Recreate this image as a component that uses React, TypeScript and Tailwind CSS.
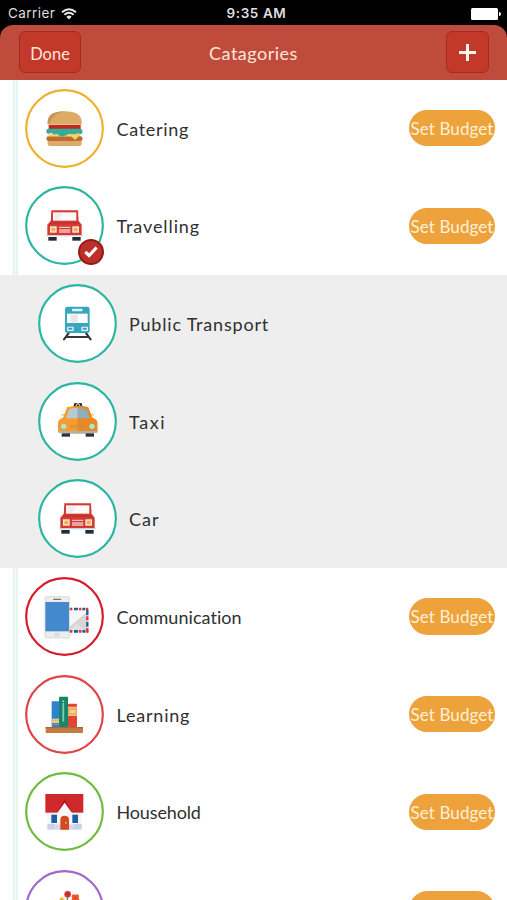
import type { ReactNode } from 'react';

const BurgerIcon = () => (
  <>
    <path d="M68 107V98Q70 67 119 67T170 98V107Z" fill="#dfaa66" />
    <path d="M68 104V98Q70 67 119 67Q84 73 74 104Z" fill="#c9965a" />
    <rect x="71" y="108" width="96" height="13" fill="#c0291f" />
    <path d="M71 141L91 130H160L167 142Z" fill="#f2d27c" />
    <path d="M71 119H166Q173 121 173 128T165 136Q160 130 153 134T138 136Q132 131 125 136T109 136Q101 130 94 135T80 132Q64 138 64 128T71 119Z" fill="#35ad97" />
    <rect x="64" y="142" width="109" height="14" rx="7" fill="#bc6c2c" />
    <path d="M71 136H166Q158 145 151 153Q143 145 137 142H71Z" fill="#f5cf68" />
    <path d="M87 134Q94 127 102 135T125 134T154 133" fill="none" stroke="#35ad97" strokeWidth="7" />
    <path d="M68 156H170V165Q170 171 163 171H75Q68 171 68 165Z" fill="#deaa69" />
  </>
);

const CarIcon = () => (
  <>
    <path d="M79 73H159L161 110H77Z" fill="#d43a33" />
    <path d="M84 79H154V104H84Z" fill="#fafafa" />
    <path d="M88 102V81H112L104 102Z" fill="#f0eeee" />
    <path d="M77 105H161L170 116V148H67V116Z" fill="#d43a33" />
    <path d="M77 108H161L166 114H72Z" fill="#c4342e" />
    <rect x="64" y="147" width="109" height="4" fill="#cfd2d4" />
    <rect x="75" y="121" width="20" height="19" fill="#f8eee0" />
    <rect x="142" y="121" width="20" height="19" fill="#f8eee0" />
    <rect x="79" y="125" width="12" height="11" fill="#f3ae45" />
    <rect x="146" y="125" width="12" height="11" fill="#f3ae45" />
    <path d="M102 124H136M102 132H136M102 138H136" stroke="#efc3bf" strokeWidth="4" />
    <rect x="70" y="153" width="25" height="11" fill="#1e2e3b" />
    <rect x="142" y="153" width="25" height="11" fill="#1e2e3b" />
  </>
);

const TrainIcon = () => (
  <>
    <path d="M93 146L78 166M143 146L158 166" stroke="#303033" strokeWidth="6" strokeLinecap="round" />
    <path d="M84 159H152" stroke="#38373a" strokeWidth="6" />
    <path d="M88 68H148Q155 68 155 77V141Q155 147 148 147H88Q81 147 81 141V77Q81 68 88 68Z" fill="#36a8ba" />
    <rect x="102" y="74" width="31" height="8" rx="2" fill="#e2f4f6" />
    <rect x="87" y="89" width="62" height="28" fill="#fff" />
    <path d="M97 92H120V116H97Z" fill="#eae6e7" />
    <rect x="87" y="128" width="20" height="13" rx="3" fill="#eaf3ff" />
    <rect x="130" y="128" width="20" height="13" rx="3" fill="#eaf3ff" />
    <path d="M91 134H103M134 134H146" stroke="#438ee0" strokeWidth="6" />
  </>
);

const TaxiIcon = () => (
  <>
    <path d="M106 76L109 63H117L120 68L123 63H131L134 76Z" fill="#3b3532" />
    <path d="M114 74L117 66M123 66L127 75" stroke="#f6e0c0" strokeWidth="3" />
    <path d="M70 99Q75 96 79 101M168 99Q163 96 159 101" fill="none" stroke="#f0b870" strokeWidth="4" />
    <path d="M88 75Q119 70 150 75L163 107Q178 113 178 122V151Q119 158 60 151V122Q60 112 75 107Z" fill="#f79b2d" />
    <path d="M119 72Q138 72 150 75L163 107Q178 113 178 122V151Q149 154 119 154Z" fill="#ea8826" />
    <path d="M94 81Q106 78 119 78V109H84Z" fill="#b4cbd5" />
    <path d="M119 78Q133 78 145 81L155 109H119Z" fill="#8faebb" />
    <path d="M97 130H143M97 136H143" stroke="#bc8f4d" strokeWidth="3" strokeDasharray="5 2" />
    <path d="M61 147H178V152Q119 157 61 152Z" fill="#aeb4ad" />
    <circle cx="77" cy="133" r="8" fill="#a6ead8" />
    <circle cx="162" cy="133" r="8" fill="#a6ead8" />
    <rect x="71" y="154" width="25" height="10" fill="#30323a" />
    <rect x="143" y="154" width="25" height="10" fill="#30323a" />
  </>
);

const PhoneIcon = () => (
  <>
    <rect x="126" y="95" width="62" height="70" fill="#f6f6f6" />
    <path d="M132 150L185 106V164H132Z" fill="#d5d6d6" />
    <path d="M132 164L155 141L185 164Z" fill="#e2e2e2" />
    <path d="M133 96H142M162 96H169M183 96H190M133 163H142M162 163H169M183 163H190" stroke="#e33231" strokeWidth="8" />
    <path d="M147 96H159M172 96H181M147 163H159M172 163H181" stroke="#265e91" strokeWidth="8" />
    <path d="M187 99V115M187 134V149" stroke="#265e91" strokeWidth="7" />
    <path d="M187 118V130M187 153V166" stroke="#e33231" strokeWidth="7" />
    <rect x="60" y="59" width="73" height="124" rx="4" fill="#eceeee" stroke="#c9cccd" strokeWidth="2" />
    <rect x="61" y="75" width="71" height="88" fill="#4489cc" />
    <path d="M86 67H107" stroke="#777" strokeWidth="4" strokeLinecap="round" />
    <rect x="92" y="169" width="9" height="8" rx="2" fill="#eee" stroke="#b8bbbc" strokeWidth="2" />
  </>
);

const BooksIcon = () => (
  <>
    <rect x="80" y="79" width="23" height="77" rx="2" fill="#2f83cc" />
    <rect x="80" y="131" width="23" height="13" fill="#f1cc82" />
    <path d="M80 136H103M80 148H103" stroke="#dfa750" strokeWidth="2" />
    <rect x="102" y="65" width="27" height="91" rx="2" fill="#168568" />
    <path d="M115 84V140" stroke="#87cdb6" strokeWidth="5" />
    <path d="M115 77V81" stroke="#d5ede2" strokeWidth="5" />
    <rect x="129" y="86" width="27" height="70" rx="2" fill="#df4638" />
    <rect x="129" y="98" width="27" height="22" fill="#f1a766" />
    <path d="M129 97H156M129 121H156" stroke="#f7d89a" strokeWidth="3" />
    <rect x="135" y="105" width="16" height="9" fill="#f5d48c" />
    <rect x="62" y="156" width="112" height="18" fill="#c47c42" />
    <path d="M62 158H174" stroke="#ad6935" strokeWidth="4" />
  </>
);

const HouseIcon = () => (
  <>
    <rect x="67" y="119" width="103" height="54" fill="#f5f5fa" />
    <rect x="67" y="156" width="103" height="17" fill="#cbd0e5" />
    <rect x="61" y="66" width="114" height="56" fill="#cf292e" />
    <path d="M97 122L119 81L142 122L119 94Z" fill="#ad1824" />
    <path d="M91 131L119 92L147 131V173H91Z" fill="#f8f8fc" />
    <rect x="91" y="157" width="56" height="16" fill="#d8daea" />
    <rect x="79" y="128" width="17" height="25" fill="#205da3" />
    <rect x="142" y="128" width="17" height="25" fill="#205da3" />
    <path d="M106 173V143Q106 131 119 131T132 143V173Z" fill="#d4491e" />
    <circle cx="123" cy="152" r="3" fill="#f3ac76" />
  </>
);

const FlowersIcon = () => (
  <>
    <path d="M128 80L123 126M151 88L128 126M108 90L123 126" stroke="#479b4d" strokeWidth="4" />
    <circle cx="128" cy="73" r="10" fill="#d9332e" />
    <g fill="#f05a26">
      <circle cx="146" cy="79" r="6" />
      <circle cx="156" cy="79" r="6" />
      <circle cx="151" cy="83" r="8" />
      <circle cx="146" cy="88" r="6" />
      <circle cx="157" cy="88" r="6" />
    </g>
    <path d="M102 92L106 84L113 82L119 91Z" fill="#f7b52e" />
    <circle cx="128" cy="73" r="3" fill="#a92126" />
    <circle cx="151" cy="83" r="3" fill="#d53325" />
  </>
);

interface Category {
  id: string;
  name?: string;
  icon: ReactNode;
  ring: string;
  tracking?: string;
  selected?: boolean;
  sub?: boolean;
}

const categories: Category[] = [
  { id: 'catering', name: 'Catering', icon: <BurgerIcon />, ring: '#efb02d', tracking: 'tracking-[0.7px]' },
  { id: 'travelling', name: 'Travelling', icon: <CarIcon />, ring: '#2bb5a3', tracking: 'tracking-[0.9px]', selected: true },
  { id: 'public', name: 'Public Transport', icon: <TrainIcon />, ring: '#2bb5a3', tracking: 'tracking-[0.8px]', sub: true },
  { id: 'taxi', name: 'Taxi', icon: <TaxiIcon />, ring: '#2bb5a3', tracking: 'tracking-[1.6px]', sub: true },
  { id: 'car', name: 'Car', icon: <CarIcon />, ring: '#2bb5a3', tracking: 'tracking-[1px]', sub: true },
  { id: 'communication', name: 'Communication', icon: <PhoneIcon />, ring: '#d71b2b', tracking: 'tracking-[0.05px]' },
  { id: 'learning', name: 'Learning', icon: <BooksIcon />, ring: '#e04449', tracking: 'tracking-[0.8px]' },
  { id: 'household', name: 'Household', icon: <HouseIcon />, ring: '#70ba3d', tracking: 'tracking-[-0.15px]' },
  { id: 'flowers', icon: <FlowersIcon />, ring: '#a067cf' },
];

function StatusBar() {
  return (
    <div className="grid h-[25px] shrink-0 grid-cols-3 items-center pl-2 pr-[6px] pt-[3px] font-[Inter,sans-serif] text-[13.5px] leading-none text-[#dedede]">
      <div className="flex items-center gap-[6px]">
        <span className="tracking-[0.45px]">Carrier</span>
        <svg className="h-3 w-4" viewBox="0 0 16 12" fill="none" stroke="#e7e7e7" strokeWidth="2">
          <path d="M1 4.3Q8-1.8 15 4.3M3.4 6.8Q8 2.8 12.6 6.8" />
          <path d="M5.4 8.7Q8 6.5 10.6 8.7L8 11.5Z" fill="#e7e7e7" stroke="none" />
        </svg>
      </div>
      <span className="pl-1 text-center font-semibold tracking-[0.6px] whitespace-nowrap">9:35 AM</span>
      <svg className="h-3 w-[30px] justify-self-end" viewBox="0 0 30 12" fill="#fff">
        <rect width="27" height="12" rx="1.5" />
        <path d="M28 4Q30 4 30 6T28 8Z" />
      </svg>
    </div>
  );
}

function CategoryRow({ name, icon, ring, tracking, selected, sub }: Category) {
  return (
    <div className={`flex h-[97.7px] shrink-0 ${sub ? 'bg-[#eeeeee] pl-[37.5px]' : 'pl-[13px]'}`}>
      {!sub && <div className="mr-[7px] w-[5px] shrink-0 border-x-2 border-[#e6f4f1] bg-[#f6fcfa]" />}
      <div className="flex flex-1 items-center pr-3 pb-[0.5px]">
        <div className="relative size-[79px] shrink-0">
          <svg className="block size-[79px]" viewBox="0 0 237 237">
            <circle cx="118.5" cy="118.5" r="115" fill="#fff" stroke={ring} strokeWidth="6.5" />
            {icon}
          </svg>
          {selected && (
            <div className="absolute right-0 bottom-0 flex size-[26px] items-center justify-center rounded-full border-2 border-[#941c18] bg-[#bd3029]">
              <svg className="h-[12px] w-[14px]" viewBox="0 0 14 12" fill="none" stroke="#fff" strokeWidth="3.2">
                <path d="M1.3 5.8L5.1 9.5L12.6 1.5" />
              </svg>
            </div>
          )}
        </div>
        <span className={`ml-[12.5px] flex-1 pt-[2px] text-[18px] whitespace-nowrap text-[#303030] ${tracking ?? ''}`}>{name}</span>
        {!sub && (
          <button className="flex h-[36.5px] w-[86px] items-center justify-center rounded-full bg-[#eda23c] pt-px text-[17px] tracking-[0.1px] whitespace-nowrap text-[#fff0d6]">
            {name && 'Set Budget'}
          </button>
        )}
      </div>
    </div>
  );
}

export default function App() {
  return (
    <div className="flex h-[900px] w-[507px] flex-col overflow-hidden bg-black font-[Lato,sans-serif]">
      <StatusBar />
      <header className="flex h-[54.5px] shrink-0 items-center justify-between rounded-t-[13px] bg-[#be4b3c] pr-[18px] pb-px pl-[19px] text-[#ffe5da]">
        <button className="flex h-[42px] w-[62px] items-center justify-center rounded-[6px] border border-[#a62b20] bg-[#c23829] pt-[5px] text-[16.5px]">
          Done
        </button>
        <h1 className="pt-[3px] pr-5 text-[18px] tracking-[0.5px]">Catagories</h1>
        <button className="flex h-[42px] w-[43px] items-center justify-center rounded-[6px] border border-[#a62b20] bg-[#c23829] pt-[2px]">
          <svg className="size-[17px]" viewBox="0 0 17 17" stroke="#fff8f2" strokeWidth="3">
            <path d="M8.5 0V17M0 8.5H17" />
          </svg>
        </button>
      </header>
      <main className="flex min-h-0 flex-1 flex-col overflow-hidden bg-white">
        {categories.map((category) => (
          <CategoryRow key={category.id} {...category} />
        ))}
      </main>
    </div>
  );
}
